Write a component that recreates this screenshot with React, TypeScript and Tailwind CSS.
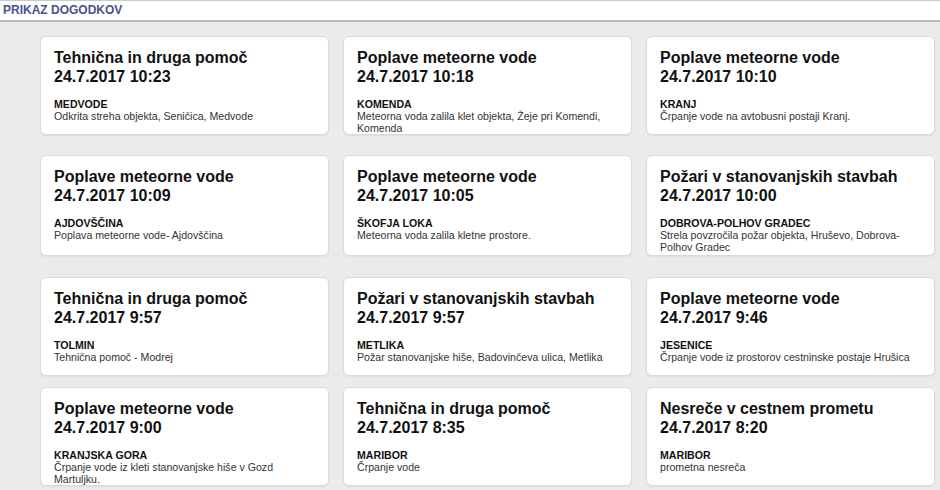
const ROWS = [
  {
    gap: "mt-[14px]",
    height: "h-[99px]",
    items: [
      { title: "Tehnična in druga pomoč", time: "24.7.2017 10:23", place: "MEDVODE", text: "Odkrita streha objekta, Seničica, Medvode" },
      { title: "Poplave meteorne vode", time: "24.7.2017 10:18", place: "KOMENDA", text: "Meteorna voda zalila klet objekta, Žeje pri Komendi, Komenda" },
      { title: "Poplave meteorne vode", time: "24.7.2017 10:10", place: "KRANJ", text: "Črpanje vode na avtobusni postaji Kranj." },
    ],
  },
  {
    gap: "mt-[20px]",
    height: "h-[101px]",
    items: [
      { title: "Poplave meteorne vode", time: "24.7.2017 10:09", place: "AJDOVŠČINA", text: "Poplava meteorne vode- Ajdovščina" },
      { title: "Poplave meteorne vode", time: "24.7.2017 10:05", place: "ŠKOFJA LOKA", text: "Meteorna voda zalila kletne prostore." },
      { title: "Požari v stanovanjskih stavbah", time: "24.7.2017 10:00", place: "DOBROVA-POLHOV GRADEC", text: "Strela povzročila požar objekta, Hruševo, Dobrova-Polhov Gradec" },
    ],
  },
  {
    gap: "mt-[21px]",
    height: "h-[99px]",
    items: [
      { title: "Tehnična in druga pomoč", time: "24.7.2017 9:57", place: "TOLMIN", text: "Tehnična pomoč - Modrej" },
      { title: "Požari v stanovanjskih stavbah", time: "24.7.2017 9:57", place: "METLIKA", text: "Požar stanovanjske hiše, Badovinčeva ulica, Metlika" },
      { title: "Poplave meteorne vode", time: "24.7.2017 9:46", place: "JESENICE", text: "Črpanje vode iz prostorov cestninske postaje Hrušica" },
    ],
  },
  {
    gap: "mt-[11px]",
    height: "h-[99px]",
    items: [
      { title: "Poplave meteorne vode", time: "24.7.2017 9:00", place: "KRANJSKA GORA", text: "Črpanje vode iz kleti stanovanjske hiše v Gozd Martuljku." },
      { title: "Tehnična in druga pomoč", time: "24.7.2017 8:35", place: "MARIBOR", text: "Črpanje vode" },
      { title: "Nesreče v cestnem prometu", time: "24.7.2017 8:20", place: "MARIBOR", text: "prometna nesreča" },
    ],
  },
];

export default function App() {
  return (
    <div className="w-[940px] h-[490px] overflow-hidden bg-[#ebebeb] font-['Liberation_Sans',Arial,sans-serif]">
      {/* Header */}
      <div className="h-[22px] bg-white border-t border-t-[#c9c9d4] border-b-2 border-b-[#b9b9c9] pl-[3px]">
        <span className="block text-[12px] font-bold text-[#4a5090] leading-[18px]">PRIKAZ DOGODKOV</span>
      </div>

      {/* Event cards */}
      <div className="pl-[40px] pr-[5px]">
        {ROWS.map((row, r) => (
          <div key={r} className={`grid grid-cols-3 gap-x-[14px] ${row.gap}`}>
            {row.items.map((item, i) => (
              <div
                key={i}
                className={`${row.height} bg-white rounded-[6px] border border-[#dadada] shadow-[0_1px_2px_rgba(0,0,0,0.06)] pl-[13px] pr-[10px] pt-[11px]`}
              >
                <div className="text-[16px] font-bold text-[#111] leading-[19px]">
                  <div>{item.title}</div>
                  <div>{item.time}</div>
                </div>
                <div className="mt-[12px] text-[10.6px] leading-[12px]">
                  <div className="font-bold text-[#111]">{item.place}</div>
                  <div className="text-[#333]">{item.text}</div>
                </div>
              </div>
            ))}
          </div>
        ))}
      </div>
    </div>
  );
}
